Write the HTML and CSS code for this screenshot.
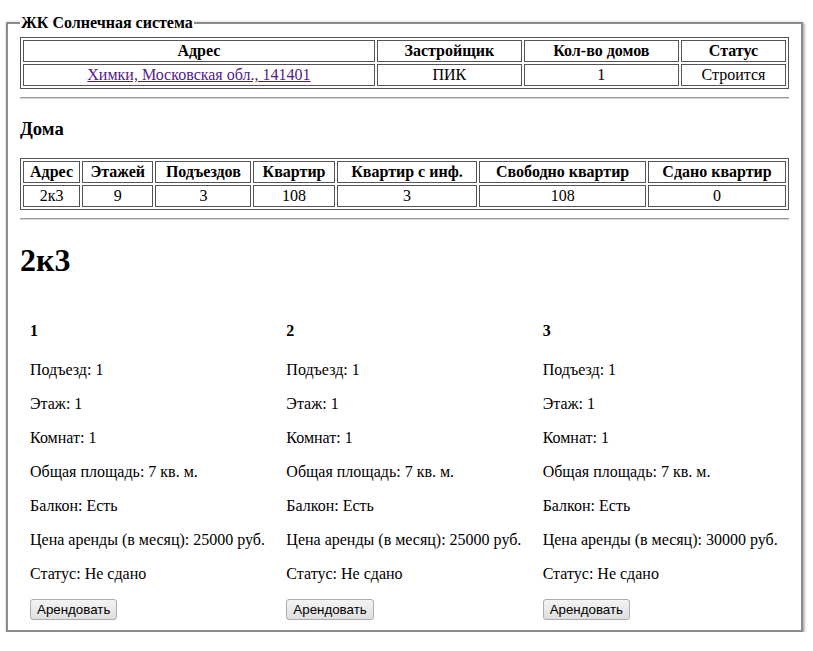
FILE: index.html
```html
<!DOCTYPE html>
<html lang="ru">
<head>
<meta charset="utf-8">
<title>ЖК Солнечная система</title>
<link rel="stylesheet" href="styles.css">
</head>
<body>
<fieldset class="complex">
  <legend class="complex-title">ЖК Солнечная система</legend>
  <table class="grid">
    <tr>
      <th class="c-addr">Адрес</th>
      <th class="c-dev">Застройщик</th>
      <th class="c-count">Кол-во домов</th>
      <th class="c-status">Статус</th>
    </tr>
    <tr>
      <td><a class="addr-link" href="#">Химки, Московская обл., 141401</a></td>
      <td>ПИК</td>
      <td>1</td>
      <td>Строится</td>
    </tr>
  </table>
  <hr class="sep">
  <h3 class="section-title">Дома</h3>
  <table class="grid">
    <tr>
      <th class="h-addr">Адрес</th>
      <th class="h-floors">Этажей</th>
      <th class="h-entr">Подъездов</th>
      <th class="h-flats">Квартир</th>
      <th class="h-info">Квартир с инф.</th>
      <th class="h-free">Свободно квартир</th>
      <th class="h-rent">Сдано квартир</th>
    </tr>
    <tr>
      <td>2к3</td>
      <td>9</td>
      <td>3</td>
      <td>108</td>
      <td>3</td>
      <td>108</td>
      <td>0</td>
    </tr>
  </table>
  <hr class="sep">
  <h1 class="house-title">2к3</h1>
  <div class="flats">
    <div class="flat">
      <h4 class="flat-num">1</h4>
      <p class="flat-row">Подъезд: 1</p>
      <p class="flat-row">Этаж: 1</p>
      <p class="flat-row">Комнат: 1</p>
      <p class="flat-row">Общая площадь: 7 кв. м.</p>
      <p class="flat-row">Балкон: Есть</p>
      <p class="flat-row">Цена аренды (в месяц): 25000 руб.</p>
      <p class="flat-row">Статус: Не сдано</p>
      <button class="rent-btn" type="button">Арендовать</button>
    </div>
    <div class="flat">
      <h4 class="flat-num">2</h4>
      <p class="flat-row">Подъезд: 1</p>
      <p class="flat-row">Этаж: 1</p>
      <p class="flat-row">Комнат: 1</p>
      <p class="flat-row">Общая площадь: 7 кв. м.</p>
      <p class="flat-row">Балкон: Есть</p>
      <p class="flat-row">Цена аренды (в месяц): 25000 руб.</p>
      <p class="flat-row">Статус: Не сдано</p>
      <button class="rent-btn" type="button">Арендовать</button>
    </div>
    <div class="flat">
      <h4 class="flat-num">3</h4>
      <p class="flat-row">Подъезд: 1</p>
      <p class="flat-row">Этаж: 1</p>
      <p class="flat-row">Комнат: 1</p>
      <p class="flat-row">Общая площадь: 7 кв. м.</p>
      <p class="flat-row">Балкон: Есть</p>
      <p class="flat-row">Цена аренды (в месяц): 30000 руб.</p>
      <p class="flat-row">Статус: Не сдано</p>
      <button class="rent-btn" type="button">Арендовать</button>
    </div>
  </div>
</fieldset>
</body>
</html>
```
FILE: styles.css
```css
html, body {
  margin: 0;
  padding: 0;
  background: #fff;
}
body {
  font-family: "Liberation Serif", "Times New Roman", serif;
  font-size: 16px;
  color: #000;
}
.complex {
  margin: 14px 10px 0 6px;
  padding: 5px 12px 10px 12px;
  border: 2px solid #8c8c8c;
  box-shadow: 1px 1px 3px rgba(0, 0, 0, 0.45);
  min-width: 0;
}
.complex-title {
  font-weight: bold;
  padding: 0 1px;
}
.grid {
  width: 100%;
  border: 1px solid #555;
  border-spacing: 2px;
  border-collapse: separate;
}
.grid th,
.grid td {
  border: 1px solid #555;
  padding: 1px;
  text-align: center;
  white-space: nowrap;
}
.grid th {
  font-weight: bold;
}
.addr-link {
  color: #551a8b;
  text-decoration: underline;
}
.sep {
  margin: 8px 0;
  height: 0;
  border: 0;
  border-top: 1px solid #9a9a9a;
  border-bottom: 1px solid #d6d6d6;
}
.section-title {
  font-size: 18.72px;
  margin: 18.72px 0;
}
.house-title {
  font-size: 32px;
  margin: 21.44px 0;
}
.flats {
  display: flex;
}
.flat {
  flex: 1 1 0;
  padding: 0 10px;
  min-width: 0;
}
.flat-num {
  font-size: 16px;
  margin: 21.28px 0;
}
.flat-row {
  margin: 16px 0;
  white-space: nowrap;
}
.rent-btn {
  font-family: "Liberation Sans", Arial, sans-serif;
  font-size: 13.33px;
  color: #000;
  height: 21px;
  padding: 1px 6px;
  border: 1px solid #acacac;
  border-radius: 3px;
  background: linear-gradient(#f4f4f4, #dfdfdf);
}
```
